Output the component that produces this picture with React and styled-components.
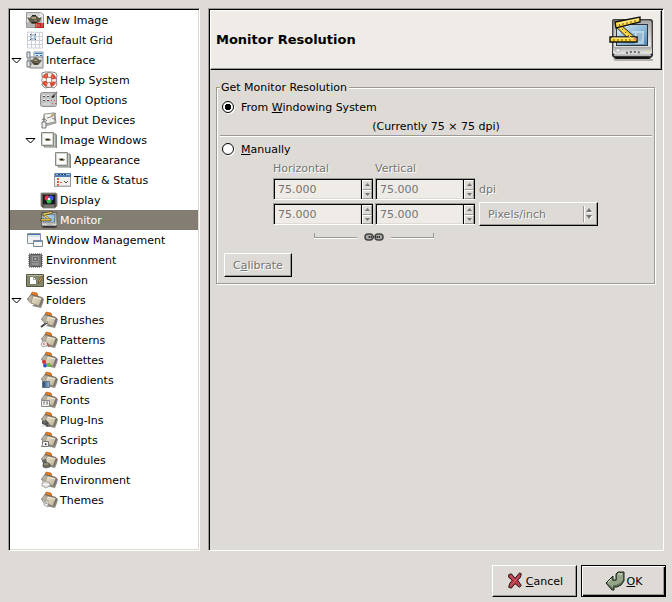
import React, { useState } from "react";
import styled, { createGlobalStyle, css } from "styled-components";

const face = "#dedbd6";
const lightFace = "#efebe7";
const shade = "#9c9a94";
const disabledInk = "#757575";

const GlobalStyle = createGlobalStyle`
  *, *::before, *::after { box-sizing: border-box; }
  body {
    margin: 0;
    background: ${face};
    color: #000;
    font: 11px/15px "DejaVu Sans", sans-serif;
  }
  button, input, select { font: inherit; color: inherit; margin: 0; }
`;

const sunken = css`
  border: 1px solid;
  border-color: ${shade} #fff #fff ${shade};
  box-shadow: inset 1px 1px #000, inset -1px -1px ${face};
`;

const raised = css`
  border: 1px solid;
  border-color: #fff #000 #000 #fff;
  box-shadow: inset -1px -1px ${shade};
`;

const insensitive = css`
  color: ${disabledInk};
  text-shadow: 1px 1px #fff;
`;

const Dialog = styled.div`
  display: flex;
  flex-direction: column;
  gap: 14px;
  min-height: 100vh;
  padding: 8px 0 5px;
`;

const Columns = styled.main`
  flex: 1;
  display: flex;
  gap: 8px;
  padding: 0 8px;
`;

const Tree = styled.ul`
  ${sunken}
  flex: 0 0 192px;
  margin: 0;
  padding: 1px;
  list-style: none;
  background: #fff;
`;

const TreeRow = styled.li`
  display: flex;
  align-items: center;
  height: 20px;
  padding-left: ${(p) => p.$level * 14}px;
  white-space: nowrap;
  cursor: default;
  ${(p) => p.$selected && css`
    background: #847d73;
    color: #fff;
  `}
`;

const ExpanderSlot = styled.span`
  flex: 0 0 16px;
  display: flex;
  padding-left: 1px;
`;

const Expander = styled.button`
  display: flex;
  padding: 0;
  border: 0;
  background: none;
`;

const TreeIcon = styled.svg`
  flex: none;
  width: 18px;
  height: 18px;
  margin-right: 2px;
`;

const Panel = styled.section`
  ${sunken}
  flex: 1;
  min-width: 0;
  padding: 1px;
`;

const PanelHeader = styled.header`
  ${raised}
  display: flex;
  align-items: center;
  justify-content: space-between;
  height: 60px;
  padding: 0 5px;
  background: ${lightFace};
`;

const Title = styled.h1`
  margin: 0;
  font-size: 13px;
  line-height: 18px;
`;

const PanelBody = styled.form`
  padding: 10px 7px 10px 6px;
`;

const Group = styled.fieldset`
  min-width: 0;
  margin: 0;
  padding: 0 2px 6px 3px;
  border: 1px solid ${shade};
  box-shadow: inset 1px 1px #fff, 1px 1px #fff;
`;

const Legend = styled.legend`
  padding: 0 2px 0 1px;
  background: ${face};
`;

const RadioRow = styled.label`
  display: flex;
  align-items: center;
  gap: 7px;
  height: 24px;
  padding-left: 2px;
`;

const Radio = styled.input`
  appearance: none;
  width: 12px;
  height: 12px;
  border: 1px solid #000;
  border-radius: 50%;
  background: #fff;
  box-shadow: 1px 1px #fff;
  &:checked {
    background: radial-gradient(circle, #000 0 3px, #fff 3px);
  }
`;

const Currently = styled.p`
  height: 16px;
  margin: 0;
  line-height: 16px;
  text-align: center;
`;

const Separator = styled.hr`
  height: 2px;
  margin: 0;
  border: solid;
  border-width: 1px 0;
  border-color: ${shade} transparent #fff;
`;

const Resolution = styled.div`
  display: grid;
  grid-template-columns: 100px 100px 121px;
  grid-template-rows: 15px 24px 24px 20px;
  column-gap: 2px;
  row-gap: 1px;
  align-items: center;
  margin-left: 53px;
  ${insensitive}
`;

const ColumnLabel = styled.span`
  grid-column: ${(p) => p.$column};
`;

const Unit = styled.span`
  padding-left: 2px;
`;

const SpinBox = styled.div`
  display: flex;
  height: 22px;
`;

const SpinInput = styled.input`
  ${sunken}
  flex: 1;
  min-width: 0;
  padding: 1px 4px;
  border-right-width: 0;
  border-radius: 0;
  background: ${lightFace};
  &:disabled { color: ${disabledInk}; }
`;

const SpinButtons = styled.div`
  display: flex;
  flex-direction: column;
  width: 12px;
  padding: 1px 1px 0;
  border: solid;
  border-width: 1px 0 1px;
  border-color: ${shade} transparent #fff;
  background: #000;
`;

const SpinButton = styled.button`
  flex: 1;
  display: flex;
  align-items: center;
  justify-content: center;
  min-height: 0;
  padding: 0;
  border: 1px solid;
  border-color: #fff ${shade} ${shade} #fff;
  background: ${face};
`;

const UnitBox = styled.div`
  ${raised}
  display: flex;
  align-items: center;
  height: 24px;
  margin-left: 2px;
  padding-right: 3px;
`;

const UnitSelect = styled.select`
  appearance: none;
  flex: 1;
  min-width: 0;
  height: 16px;
  padding: 0 8px;
  border: 0;
  border-right: 1px solid ${shade};
  border-radius: 0;
  box-shadow: 1px 0 #fff;
  background: none;
  &:disabled { opacity: 1; ${insensitive} }
`;

const UnitArrows = styled.svg`
  flex: none;
  width: 10px;
  height: 12px;
`;

const ChainRow = styled.div`
  grid-column: 1 / 3;
  display: flex;
  justify-content: center;
  gap: 7px;
`;

const Bracket = styled.span`
  width: 43px;
  height: 5px;
  border: solid ${shade};
  border-width: ${(p) => (p.$end ? "0 1px 1px 0" : "0 0 1px 1px")};
  box-shadow: 0 1px #fff;
`;

const ChainButton = styled.button`
  display: flex;
  padding: 0;
  border: 0;
  background: none;
`;

const Calibrate = styled.button`
  ${raised}
  display: block;
  height: 24px;
  margin: 6px 0 0 4px;
  padding: 0 8px;
  background: ${face};
  &:disabled { ${insensitive} }
`;

const Footer = styled.footer`
  display: flex;
  justify-content: flex-end;
  gap: 4px;
  padding: 0 6px;
`;

const ActionButton = styled.button`
  ${raised}
  display: flex;
  align-items: center;
  justify-content: center;
  gap: 2px;
  width: 85px;
  height: 32px;
  padding: 0;
  background: ${face};
  ${(p) => p.$default && css`
    border-color: #000;
    box-shadow: inset 1px 1px #fff, inset -1px -1px #000, inset -2px -2px ${shade};
  `}
`;

const Teapot = ({ x = 0, y = 0 }) => (
  <g transform={`translate(${x} ${y})`}>
    <path d="M0 3 3 4 4 2h6l2 2 3-1-2 4-3 3H5L2 7z" fill="#5e5946" />
    <path d="M4 3h5v2H5z" fill="#a19a80" />
    <path d="M5 1h4v1H5zM4 8h6v1H5z" fill="#292820" />
    <path d="M7 6h3v1H7z" fill="#8b8468" />
  </g>
);

const Folder = ({ children }) => (
  <>
    <path d="m6 15 9 2 2-5 1-4-2-1z" fill="#6d6a64" opacity=".8" />
    <path d="M5 4 6 1l5 1 1 3z" fill="#e97a1c" stroke="#a8571b" strokeWidth=".6" />
    <path d="M1 8 5 3l11 3 1 2-3 7-10-3z" fill="#6d675b" />
    <path d="m2 7 3-3 3 1-3 7-2-1z" fill="#b8b1a1" />
    <path d="m7 5 9 2-3 8-8-3z" fill="url(#folderFace)" stroke="#8b806a" strokeWidth=".6" />
    <path d="m8 6 7 2" stroke="#f6f1e4" strokeWidth=".8" />
    {children}
  </>
);

const MonitorArt = () => (
  <>
    <path d="M5 43h40v2H7z" fill="#000" opacity=".25" />
    <path d="M4 5q0-2 2-2h36q3 0 3 3v34l-3 3H7l-3-3z" fill="#353535" />
    <path d="M5 5q0-1 2-1h34q3 0 3 3v28q0 2-2 2H7q-2 0-2-2z" fill="url(#monitorShell)" stroke="#4f4f4f" />
    <path d="M8 8h32v22H8z" fill="#303438" />
    <path d="M9 9h30v20H9z" fill="url(#monitorGlass)" />
    <path d="M24 15h12v13h-9V17h-3z" fill="#d5e6f1" opacity=".65" />
    <path d="M29 18h5m-5 2h5m-5 2h5m-5 2h4" stroke="#789fba" />
    <path d="M9 9h13L9 21z" fill="#fff" opacity=".25" />
    <path d="M5 31h39v6l-2 2H7l-2-2z" fill="url(#monitorShell)" />
    <path d="M8 33h4v3H8z" fill="#f6f6f6" stroke="#a4a4a4" strokeWidth=".7" />
    <path d="M18 37q7-2 16 0" fill="none" stroke="#666" strokeWidth="2" strokeDasharray="2 2" />
    <path d="M38 34h3v2h-3z" fill="#e4dd94" />
    <path d="M6 39h37v1H6z" fill="#b5b5b5" />
    <path d="M7 41h34v2H9z" fill="#151515" />
    <path d="M7 10 13 9 29 23 24 26z" fill="#f6c92f" stroke="#222" />
    <path d="M7 6 32 1 32 6 8 12z" fill="#ffda48" stroke="#111" strokeWidth="1.4" />
    <path d="M2 21h27v5H2z" fill="#ffd536" stroke="#111" strokeWidth="1.4" />
    <path d="M10 8 30 3m-26 19h23m-15-10 12 11" stroke="#fff1a0" />
    <path d="m11 8 1 2m3-3v2m4-3v2m4-3v2m4-3v2M6 23v2m4-2v2m4-2v2m4-2v2m4-2v2M15 13l-1 1m4 2-1 1m4 2-1 1" stroke="#705615" />
    <circle cx="27" cy="23" r="1.6" fill="#e5906b" />
  </>
);

const StackedWindows = () => (
  <>
    <path d="M4 17h12V4h1v13z" fill="#8a8d87" />
    <path d="M4 3h12v13H4z" fill="#c9ccc6" stroke="#7d827b" />
    <path d="M1.500 1.500h12v13h-12z" fill="#d5d8d2" stroke="#858b83" />
    <path d="M3 3h9v10H3z" fill="#fdfdfb" />
    <path d="m4 7 2 1 1-1 4 1-1 2H6z" fill="#8b7f68" />
    <path d="M6 8h3v1H6z" fill="#2b261f" />
  </>
);

const icons = {
  newImage: (
    <>
      <path d="M.500 1.500h14l3 2v13h-17z" fill="#ececec" stroke="#9b9b9b" />
      <path d="M1 2h13v3H1z" fill="#d4d4d4" />
      <path d="M1 11 16 8v8H1z" fill="#b5b5b5" />
      <Teapot x={1} y={3} />
      <path d="M9 12h9v5H9z" fill="#c41f20" />
      <path d="M10 16v-3h1v3m2-3v3m2-3h2m-2 2h2" stroke="#f0a0a0" strokeWidth=".7" fill="none" />
    </>
  ),
  grid: (
    <>
      <path d="M1 1h16v16H1z" fill="#fdfdff" />
      <path d="M1 5.500h16M1 9.500h16M1 13.500h16M5.500 1v16M9.500 1v16M13.500 1v16M1.500 1v16h15V1.500z" stroke="#cdd0d8" fill="none" />
      <path d="M5 4h4v4H5z" fill="#e4f0f8" stroke="#7e9db4" />
      <path d="M4 3h1v1H4zm5 0h1v1H9zM4 8h1v1H4zm5 0h1v1H9z" fill="#36546b" />
    </>
  ),
  interface: (
    <>
      <path d="M8 1h9v6H8z" fill="#dbe7f1" stroke="#8297ab" />
      <path d="M9 2h7v1H9zm1 2h2v1h-2zm4 0h2v1h-2z" fill="#3977b7" />
      <path d="M1 1h3v6H1z" fill="#e1e6ea" stroke="#69737b" />
      <path d="M4 6h13v11H4z" fill="#d9dbda" stroke="#858585" />
      <g transform="translate(4 6) scale(.8)"><Teapot /></g>
      <path d="M1 10h3v6H1z" fill="#e9e9e9" stroke="#777" />
      <path d="M2 8v2m2 3h2" stroke="#557996" />
    </>
  ),
  help: (
    <>
      <path d="m2 2 3-1h7l4 1 1 3-1 4 1 5-3 3-4-1-5 1-3-3 1-5-1-4z" fill="none" stroke="#8a8a8a" />
      <circle cx="9" cy="9" r="5" fill="none" stroke="#6a4b42" strokeWidth="5" />
      <circle cx="9" cy="9" r="5" fill="none" stroke="#f2eeea" strokeWidth="4" />
      <circle cx="9" cy="9" r="5" fill="none" stroke="#e0452a" strokeWidth="4" strokeDasharray="4.500 3.350" strokeDashoffset="-1.700" />
      <path d="M5 5h2m5 0 1 2M5 12l2 1m5-1 1-2" stroke="#fa9b7e" />
    </>
  ),
  tools: (
    <>
      <rect x=".5" y="1.500" width="16" height="14" rx="2" fill="#c3c3c3" stroke="#909090" />
      <path d="M3 5h2v1H3zm4 0h2v1H7zM3 9h2v1H3zm4 0h2v1H7z" fill="#4e4e4e" />
      <path d="M3 4h2v1H3zm4 0h2v1H7zM3 8h2v1H3zm4 0h2v1H7z" fill="#f2f2f2" />
      <path d="m17 1-4 4" stroke="#888" strokeWidth="2" /><path d="m11 6 3-2 1 1-2 2z" fill="#222" />
      <path d="M11 9h1v1h-1zm3 0h1v1h-1zm-2 3h1v1h-1zm3 0h1v1h-1z" fill="#cf504e" />
      <path d="M3 13h7" stroke="#e4e4e4" />
    </>
  ),
  input: (
    <>
      <path d="M4 4 15 2l1 10-11 3-2-3z" fill="#bebeba" stroke="#777" strokeWidth=".7" />
      <path d="m4 3 10-1 1 9-10 2z" fill="#f4f4ef" stroke="#969690" />
      <path d="m16 2-5 4-4 1m5 0 4 2" stroke="#858585" fill="none" />
      <path d="m11 5 2-1" stroke="#c89d52" strokeWidth="2" />
      <path d="M2 11h4v6H2z" fill="#ededed" stroke="#777" />
      <path d="M2 9q2-3 5 1" stroke="#777" fill="none" />
    </>
  ),
  windows: <StackedWindows />,
  title: (
    <>
      <path d="M.500 2.500h16v13H.500z" fill="#f0f0ee" stroke="#999" />
      <path d="M1 2h16v4H1z" fill="#4f7cae" /><path d="M2 3h14v1H2z" fill="#9fc1df" />
      <path d="M4 3.500h2m1 0h2m1 0h2" stroke="#274a71" />
      <path d="M3 7h2v2H3zm0 3h2v2H3zm0 3h2v2H3zm3-2h2v1H6z" fill="#e8543c" />
      <path d="m10 10 2 2 2-2" stroke="#555" fill="none" /><path d="M2 15h14" stroke="#b5b5b5" />
    </>
  ),
  display: (
    <>
      <path d="M1 2h15l1 1v12l-2 2H3l-2-2z" fill="#55554b" stroke="#95948a" />
      <path d="M3 4h12v9H3z" fill="#191b20" />
      <circle cx="7" cy="7" r="2.500" fill="#ed3045" /><circle cx="11" cy="7" r="2.500" fill="#3a5bf0" />
      <circle cx="9" cy="10" r="2.500" fill="#30b749" /><circle cx="9" cy="8" r="1.200" fill="#fff" />
      <path d="M4 15h10" stroke="#999" />
    </>
  ),
  monitor: <g transform="scale(.38)"><MonitorArt /></g>,
  windowManagement: (
    <>
      <path d="M1.500 2.500h13v10h-13z" fill="#f0f2f2" stroke="#8b959e" />
      <path d="M2 3h12v1H2z" fill="#4777a6" /><path d="M2 5h12" stroke="#cad6e0" />
      <path d="M7.500 9.500h9v6h-9z" fill="#f7f7f4" stroke="#7f8991" />
      <path d="M8 10h8v1H8z" fill="#6590b9" />
    </>
  ),
  environment: (
    <>
      <rect x="3" y="3" width="13" height="13" fill="none" stroke="#9a9a9a" strokeWidth="2" strokeDasharray="1 1" />
      <rect x="3.500" y="3.500" width="12" height="12" rx="1" fill="#7b7b7b" stroke="#555" />
      <path d="M6.500 5.500h6v5h-6z" fill="#6a6a6a" stroke="#999" />
      <path d="m8 7 3 1-2 1z" fill="#ddd" /><path d="M6 13h7" stroke="#adadad" />
    </>
  ),
  session: (
    <>
      <path d="M.500 3.500h17v12H.500z" fill="#84896e" stroke="#54583f" />
      <path d="M1 4h16v1H1z" fill="#b2b69c" />
      <path d="M3.500 5.500h4l3 3v5h-7z" fill="#fff" stroke="#777b69" /><path d="M7.500 5.500v3h3" fill="none" stroke="#aaa" />
      <path d="m12 13 1-4 3-4 1 1-3 5z" fill="#d8a35a" stroke="#5a4932" strokeWidth=".7" />
    </>
  ),
  folder: <Folder />,
  brushes: <Folder><path d="m1 16 4-3 3-2" stroke="#444" strokeWidth="2" fill="none" /><path d="m5 12 3-1" stroke="#b7bdc4" /></Folder>,
  patterns: <Folder><path d="m2 11 3-1 3 2-1 3-4 1-2-2z" fill="#e8e8e8" stroke="#888" strokeWidth=".7" /><path d="m7 12 2 4m-6-3h2" stroke="#c7423b" /></Folder>,
  palettes: <Folder><circle cx="4" cy="11" r="2" fill="#df2e2e" /><circle cx="5" cy="14.500" r="2" fill="#3459c6" /><circle cx="9" cy="14" r="2" fill="#70b638" /></Folder>,
  gradients: <Folder><path d="M2.500 10.500h7v6h-7z" fill="url(#blueRamp)" stroke="#65758a" /></Folder>,
  fonts: <Folder><path d="M1.500 9.500h8v6h-8z" fill="#f2f2ef" stroke="#888" /><path d="M4 14v-3m-1 0h2m2 0v3m0-2h1m-2-1h2" stroke="#777" strokeWidth=".8" /></Folder>,
  plugins: <Folder><path d="m2 10 4-1 3 3 1 3-3 1-2-2-3-1z" fill="#505050" /><path d="M4 10h1v2H4zm4 3h1v1H8zm-6 2h4" stroke="#aaa" strokeWidth=".6" /></Folder>,
  scripts: <Folder><path d="M2.500 10.500h6v5h-7l1-2z" fill="#f0f0f0" stroke="#777" /><path d="m5 12 2 1-1 1H5z" fill="#333" /></Folder>,
  modules: <Folder><path d="m2 9 4-1 1 4-4 1z" fill="#666" /><path d="m3 13 3-2 4 2v3l-4 1-3-1z" fill="#746c58" stroke="#444" strokeWidth=".6" /><path d="M4 13h4" stroke="#b7ad91" /></Folder>,
  environmentFolder: <Folder><path d="m2 12 3-2 5 2v3l-4 2-4-2z" fill="#e0e1dd" stroke="#888" strokeWidth=".7" /><path d="m3 13 3 1 3-1" stroke="#fff" fill="none" /></Folder>,
  themes: <Folder><path d="m4 11 4-2v7l-4-2z" fill="#f0f0ec" stroke="#8a8a85" strokeWidth=".7" /><path d="M5 12h2" stroke="#777" /></Folder>,
};

const entries = [
  ["New Image", "newImage", 0],
  ["Default Grid", "grid", 0],
  ["Interface", "interface", 0, true],
  ["Help System", "help", 1],
  ["Tool Options", "tools", 1],
  ["Input Devices", "input", 1],
  ["Image Windows", "windows", 1, true],
  ["Appearance", "windows", 2],
  ["Title & Status", "title", 2],
  ["Display", "display", 1],
  ["Monitor", "monitor", 1],
  ["Window Management", "windowManagement", 0],
  ["Environment", "environment", 0],
  ["Session", "session", 0],
  ["Folders", "folder", 0, true],
  ["Brushes", "brushes", 1],
  ["Patterns", "patterns", 1],
  ["Palettes", "palettes", 1],
  ["Gradients", "gradients", 1],
  ["Fonts", "fonts", 1],
  ["Plug-Ins", "plugins", 1],
  ["Scripts", "scripts", 1],
  ["Modules", "modules", 1],
  ["Environment", "environmentFolder", 1],
  ["Themes", "themes", 1],
];

function Spin({ label }) {
  return (
    <SpinBox>
      <SpinInput aria-label={label} defaultValue="75.000" disabled />
      <SpinButtons>
        <SpinButton type="button" aria-label={`Increase ${label}`} disabled>
          <svg width="5" height="3"><path d="M2.500 0 5 3H0z" fill={disabledInk} /></svg>
        </SpinButton>
        <SpinButton type="button" aria-label={`Decrease ${label}`} disabled>
          <svg width="5" height="3"><path d="M0 0h5L2.500 3z" fill={disabledInk} /></svg>
        </SpinButton>
      </SpinButtons>
    </SpinBox>
  );
}

export default function App() {
  const [source, setSource] = useState("system");
  const [selected, setSelected] = useState(10);

  return (
    <Dialog>
      <GlobalStyle />
      <Columns>
        <Tree role="tree" aria-label="Preferences">
          {entries.map(([name, icon, level, expanded], index) => (
            <TreeRow
              key={index}
              role="treeitem"
              aria-level={level + 1}
              aria-expanded={expanded}
              aria-selected={index === selected}
              $level={level}
              $selected={index === selected}
              onClick={() => setSelected(index)}
            >
              <ExpanderSlot>
                {expanded && (
                  <Expander type="button" aria-label={`Collapse ${name}`}>
                    <svg width="11" height="7"><path d="M1 1.500h9L5.500 6z" fill="#fff" stroke="#000" /></svg>
                  </Expander>
                )}
              </ExpanderSlot>
              <TreeIcon viewBox="0 0 18 18" aria-hidden="true">{icons[icon]}</TreeIcon>
              <span>{name}</span>
            </TreeRow>
          ))}
        </Tree>

        <Panel>
          <PanelHeader>
            <Title>Monitor Resolution</Title>
            <svg width="48" height="48" viewBox="0 0 48 48" aria-hidden="true">
              <defs>
                <linearGradient id="monitorShell" x2="0" y2="1">
                  <stop offset="0" stopColor="#a6a6a6" /><stop offset=".75" stopColor="#e7e7e7" /><stop offset="1" stopColor="#b8b8b8" />
                </linearGradient>
                <linearGradient id="monitorGlass" x2="1" y2="1">
                  <stop offset="0" stopColor="#d2e4ee" /><stop offset=".5" stopColor="#92bddb" /><stop offset="1" stopColor="#5189b5" />
                </linearGradient>
                <linearGradient id="blueRamp">
                  <stop offset="0" stopColor="#163c66" /><stop offset="1" stopColor="#a3c2de" />
                </linearGradient>
                <linearGradient id="folderFace" x2="1" y2="1">
                  <stop offset="0" stopColor="#eee6d2" /><stop offset="1" stopColor="#b9ad92" />
                </linearGradient>
              </defs>
              <MonitorArt />
            </svg>
          </PanelHeader>
          <PanelBody>
            <Group>
              <Legend>Get Monitor Resolution</Legend>
              <RadioRow>
                <Radio type="radio" name="source" checked={source === "system"} onChange={() => setSource("system")} />
                <span>From <u>W</u>indowing System</span>
              </RadioRow>
              <Currently>(Currently 75 × 75 dpi)</Currently>
              <Separator />
              <RadioRow>
                <Radio type="radio" name="source" checked={source === "manual"} onChange={() => setSource("manual")} />
                <span><u>M</u>anually</span>
              </RadioRow>
              <Resolution>
                <ColumnLabel $column={1}>Horizontal</ColumnLabel>
                <ColumnLabel $column={2}>Vertical</ColumnLabel>
                <ColumnLabel $column={3} />
                <Spin label="Horizontal dpi" />
                <Spin label="Vertical dpi" />
                <Unit>dpi</Unit>
                <Spin label="Horizontal resolution" />
                <Spin label="Vertical resolution" />
                <UnitBox>
                  <UnitSelect aria-label="Resolution unit" disabled>
                    <option>Pixels/inch</option>
                  </UnitSelect>
                  <UnitArrows viewBox="0 0 10 12" aria-hidden="true">
                    <path d="m6 1 3 4H3zM3 8h6l-3 4z" fill="#fff" />
                    <path d="m5 0 3 4H2zM2 7h6l-3 4z" fill={disabledInk} />
                  </UnitArrows>
                </UnitBox>
                <ChainRow>
                  <Bracket />
                  <ChainButton type="button" aria-label="Link resolutions" disabled>
                    <svg width="20" height="8" viewBox="0 0 20 8">
                      <rect x="1" y="1" width="8" height="6" rx="3" fill="#aaa" stroke="#444" strokeWidth="1.500" />
                      <rect x="11" y="1" width="8" height="6" rx="3" fill="#aaa" stroke="#444" strokeWidth="1.500" />
                      <path d="M4 4h12" stroke="#333" strokeWidth="2" />
                      <path d="M4 4h12" stroke="#ccc" strokeDasharray="1 1" />
                    </svg>
                  </ChainButton>
                  <Bracket $end />
                </ChainRow>
              </Resolution>
              <Calibrate type="button" disabled>C<u>a</u>librate</Calibrate>
            </Group>
          </PanelBody>
        </Panel>
      </Columns>

      <Footer>
        <ActionButton type="button">
          <svg width="18" height="18" viewBox="0 0 20 20" aria-hidden="true">
            <path d="m3 3 3-1 4 5 5-6 2 1-1 4-3 3 4 6-2 2-5-4-4 5-3-1 1-4 3-4-4-3z" fill="#b83b48" stroke="#1e0c0e" />
            <path d="m5 4 5 6-5 5m9-10-4 5" stroke="#d2606c" fill="none" />
          </svg>
          <span><u>C</u>ancel</span>
        </ActionButton>
        <ActionButton type="button" $default>
          <svg width="20" height="20" viewBox="0 0 20 20" aria-hidden="true">
            <path d="m1 12 7-7v4h3V3l2-2h6v9l-3 4-4 2H9v3H7z" fill="#5d6e55" stroke="#1b2417" />
            <path d="m2 12 5-5v3h4l1-1V4l1-2h5v7l-3 3-4 2H8v3z" fill="#94a588" />
            <path d="m3 11 3-3m7-5h4" stroke="#d6e0cd" fill="none" />
          </svg>
          <span><u>O</u>K</span>
        </ActionButton>
      </Footer>
    </Dialog>
  );
}
